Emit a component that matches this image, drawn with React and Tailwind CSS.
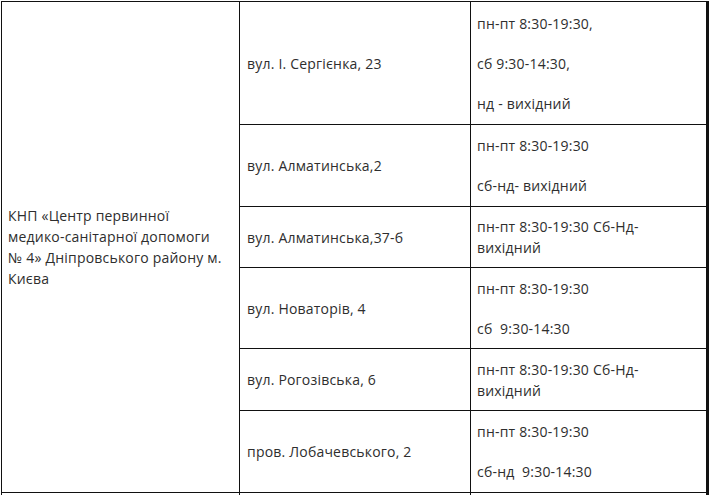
const ROWS = [
  { address: "вул. І. Сергієнка, 23", hours: ["пн-пт 8:30-19:30,", "сб 9:30-14:30,", "нд - вихідний"], h: "h-[123px]" },
  { address: "вул. Алматинська,2", hours: ["пн-пт 8:30-19:30", "сб-нд- вихідний"], h: "h-[82px]" },
  { address: "вул. Алматинська,37-б", wrap: ["пн-пт 8:30-19:30 Сб-Нд-", "вихідний"], h: "h-[61px]" },
  { address: "вул. Новаторів, 4", hours: ["пн-пт 8:30-19:30", "сб  9:30-14:30"], h: "h-[81px]" },
  { address: "вул. Рогозівська, 6", wrap: ["пн-пт 8:30-19:30 Сб-Нд-", "вихідний"], h: "h-[62px]" },
  { address: "пров. Лобачевського, 2", hours: ["пн-пт 8:30-19:30", "сб-нд  9:30-14:30"], h: "h-[82px]" },
];

const cell = "border border-[#111] align-middle";

export default function App() {
  return (
    <div className="min-h-screen bg-white pl-px pt-px font-['Open_Sans',sans-serif] text-[14px] leading-[21px] tracking-[0.2px] text-[#2e2e2e]">
      <table className="w-[706px] table-fixed border-collapse border-r-[3px] border-r-[#111]">
        <colgroup>
          <col className="w-[238px]" />
          <col className="w-[231px]" />
          <col className="w-[237px]" />
        </colgroup>
        <tbody>
          {ROWS.map((row, i) => (
            <tr key={row.address} className={row.h}>
              {i === 0 ? (
                <td rowSpan={ROWS.length} className={`${cell} px-[6px] py-[10px]`}>
                  КНП «Центр первинної
                  <br />
                  медико-санітарної допомоги
                  <br />
                  № 4» Дніпровського району м.
                  <br />
                  Києва
                </td>
              ) : null}
              <td className={`${cell} pl-[7px] pr-[6px] py-[10px]`}>{row.address}</td>
              <td className={`${cell} pl-[6px] pr-[6px] py-[9px]`}>
                {row.hours ? (
                  <div className="flex flex-col gap-[19px]">
                    {row.hours.map((line) => (
                      <p key={line} className="whitespace-pre">{line}</p>
                    ))}
                  </div>
                ) : (
                  <p>
                    {row.wrap[0]}
                    <br />
                    {row.wrap[1]}
                  </p>
                )}
              </td>
            </tr>
          ))}
          <tr className="h-[40px]">
            <td className={cell}></td>
            <td className={cell}></td>
            <td className={cell}></td>
          </tr>
        </tbody>
      </table>
    </div>
  );
}
